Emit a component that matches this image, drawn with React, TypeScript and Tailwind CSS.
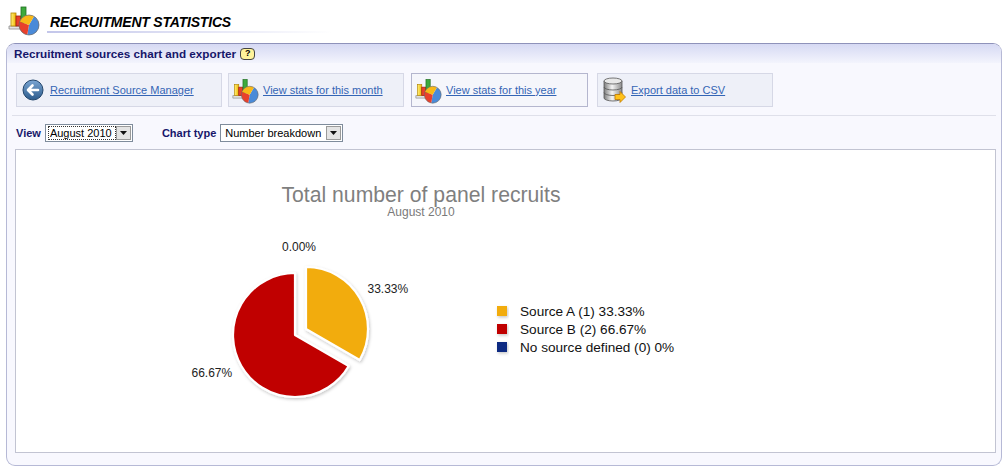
import React from "react";

const font = { fontFamily: '"Liberation Sans", Arial, sans-serif' };

function ChartIcon({ size = 32, id }: { size?: number; id: string }) {
  return (
    <svg width={size} height={size} viewBox="0 0 32 32">
      <defs>
        <linearGradient id={`y${id}`} x1="0" x2="1">
          <stop offset="0" stopColor="#fff27a" />
          <stop offset="1" stopColor="#f0b400" />
        </linearGradient>
      </defs>
      <path d="M1 22 h18 l-2 3 h-16 z" fill="#e4e4e4" stroke="#8a8a8a" strokeWidth="0.8" />
      <rect x="3" y="9" width="5" height="13" fill={`url(#y${id})`} stroke="#b38600" strokeWidth="0.8" />
      <rect x="8" y="12" width="5" height="10" fill="#e8402c" stroke="#9c2010" strokeWidth="0.8" />
      <rect x="13" y="3" width="5" height="16" fill="#3caa3c" stroke="#1f6e1f" strokeWidth="0.8" />
      <path d="M21 21 L26 12.34 A10 10 0 0 1 19.26 30.85 Z" fill="#4a8ad8" />
      <path d="M21 21 L19.26 30.85 A10 10 0 0 1 11.6 17.58 Z" fill="#e8402c" />
      <path d="M21 21 L11.6 17.58 A10 10 0 0 1 26 12.34 Z" fill="#f8b818" />
      <circle cx="21" cy="21" r="10" fill="none" stroke="#6a6a6a" strokeWidth="0.7" />
    </svg>
  );
}

function BackIcon() {
  return (
    <svg width="22" height="22" viewBox="0 0 22 22">
      <defs>
        <linearGradient id="ba" x1="0" y1="0" x2="0" y2="1">
          <stop offset="0" stopColor="#7ba6d3" />
          <stop offset="1" stopColor="#2c5b8c" />
        </linearGradient>
      </defs>
      <circle cx="11" cy="11" r="10" fill="url(#ba)" stroke="#23466c" strokeWidth="1" />
      <path d="M16 11 H6.5 M10.5 6.5 L6 11 L10.5 15.5" stroke="#fff" strokeWidth="2.6" fill="none" strokeLinecap="round" strokeLinejoin="round" />
    </svg>
  );
}

function DbIcon() {
  return (
    <svg width="25" height="28" viewBox="0 0 25 28">
      <defs>
        <linearGradient id="db" x1="0" x2="1">
          <stop offset="0" stopColor="#7d7d7d" />
          <stop offset="0.45" stopColor="#f4f4f4" />
          <stop offset="1" stopColor="#8a8a8a" />
        </linearGradient>
      </defs>
      <path d="M2 5 v17 a9 3 0 0 0 18 0 v-17" fill="url(#db)" stroke="#555" strokeWidth="0.8" />
      <ellipse cx="11" cy="5" rx="9" ry="3" fill="#e8e8e8" stroke="#555" strokeWidth="0.8" />
      <path d="M2 11 a9 3 0 0 0 18 0 M2 16.5 a9 3 0 0 0 18 0" fill="none" stroke="#555" strokeWidth="0.8" />
      <path d="M13 18.5 h5 v-3 l5.5 5.5 l-5.5 5.5 v-3 h-5 z" fill="#ffc21a" stroke="#c07800" strokeWidth="0.8" strokeLinejoin="round" />
    </svg>
  );
}

function Select({ value, width, focused }: { value: string; width: string; focused?: boolean }) {
  return (
    <div className={`flex h-[18px] shrink-0 items-center border border-[#7f8c9c] bg-white ${width}`}>
      <span className={`ml-[2px] min-w-0 flex-1 whitespace-nowrap border px-[1px] text-[11px] leading-[12px] text-black ${focused ? "border-dotted border-[#333]" : "border-transparent"}`}>{value}</span>
      <span className="mr-[1px] flex h-[14px] w-[15px] shrink-0 items-center justify-center border border-[#9a9a9a] bg-[#e4e4e4]">
        <svg width="7" height="4" viewBox="0 0 7 4"><path d="M0 0 H7 L3.5 4 Z" fill="#111" /></svg>
      </span>
    </div>
  );
}

const buttons = [
  { label: "Recruitment Source Manager", icon: "back", w: "w-[206px]", ml: "", cls: "border-[#d6d8e6] bg-[#eef0f8]" },
  { label: "View stats for this month", icon: "chart", w: "w-[176px]", ml: "ml-[6px]", cls: "border-[#d6d8e6] bg-[#eef0f8]" },
  { label: "View stats for this year", icon: "chart", w: "w-[177px]", ml: "ml-[7px]", cls: "border-[#b4b6ce] bg-[#f5f6fb]" },
  { label: "Export data to CSV", icon: "db", w: "w-[176px]", ml: "ml-[9px]", cls: "border-[#d6d8e6] bg-[#eef0f8]" },
];

function PieChart() {
  return (
    <svg width="979" height="302" viewBox="16 150 979 302" className="block">
      <defs>
        <filter id="sh" x="-20%" y="-20%" width="140%" height="140%">
          <feDropShadow dx="1" dy="1.5" stdDeviation="1.5" floodColor="#000" floodOpacity="0.22" />
        </filter>
      </defs>
      <g style={font}>
        <text x="421" y="202" textAnchor="middle" fontSize="21.2" fill="#7f7f7f">Total number of panel recruits</text>
        <text x="421" y="216" textAnchor="middle" fontSize="12" fill="#7a7a7a">August 2010</text>
      </g>
      <g filter="url(#sh)">
        <path d="M295 335 L348.7 366 A62 62 0 1 1 295 273 Z" fill="#c00000" stroke="#fff" strokeWidth="2.2" strokeLinejoin="round" />
        <path d="M306 329 L306 267 A62 62 0 0 1 359.7 360 Z" fill="#f2ac10" stroke="#fff" strokeWidth="2.2" strokeLinejoin="round" />
      </g>
      <g style={font} fontSize="12" fill="#222">
        <text x="282" y="251">0.00%</text>
        <text x="367.5" y="293">33.33%</text>
        <text x="191.5" y="377">66.67%</text>
      </g>
      <g filter="url(#sh)">
        <rect x="497" y="306" width="10" height="10" fill="#f2ac10" />
        <rect x="497" y="324" width="10" height="10" fill="#c00000" />
        <rect x="497" y="342" width="10" height="10" fill="#0a2a82" />
      </g>
      <g style={font} fontSize="13.6" fill="#111">
        <text x="520" y="316">Source A (1) 33.33%</text>
        <text x="520" y="334">Source B (2) 66.67%</text>
        <text x="520" y="352">No source defined (0) 0%</text>
      </g>
    </svg>
  );
}

export default function App() {
  return (
    <div className="h-[472px] w-[1008px] overflow-hidden bg-white" style={font}>
      <div className="flex pl-[8px] pt-[4px]">
        <ChartIcon id="h" />
        <div className="ml-[10px] pt-[10px]">
          <div className="text-[14px] font-bold italic leading-[16px] tracking-[-0.2px] text-black">RECRUITMENT STATISTICS</div>
          <div className="-ml-[3px] mt-[1px] h-[2px] w-[286px] bg-gradient-to-r from-[#c3c6ea] to-transparent" />
        </div>
      </div>

      <div className="mx-[6px] mt-[7px] overflow-hidden rounded-[9px] border border-[#b6b9d6] border-t-[#8e92ba] bg-[#f8f8fe]">
        <div className="flex h-[19px] items-center bg-gradient-to-b from-[#d6d9f3] to-[#f3f4fd] pl-[7px]">
          <span className="text-[11.7px] font-bold text-[#16166a]">Recruitment sources chart and exporter</span>
          <span className="ml-[4px] flex h-[12px] w-[15px] items-center justify-center rounded-[4px] border border-[#444] bg-[#fff39a] text-[9px] font-bold leading-none text-black">?</span>
        </div>

        <div className="px-[5px] pb-[12px]">
          <div className="flex pl-[4px] pt-[10px]">
            {buttons.map((b) => (
              <div key={b.label} className={`flex h-[34px] items-center border ${b.cls} ${b.w} ${b.ml}`}>
                {b.icon === "back" && <span className="ml-[5px] mr-[6px] flex"><BackIcon /></span>}
                {b.icon === "chart" && <span className="ml-[3px] mr-[4px] flex"><ChartIcon size={27} id={b.label.replace(/ /g, "")} /></span>}
                {b.icon === "db" && <span className="ml-[4px] mr-[4px] flex"><DbIcon /></span>}
                <a href="#" className="text-[11px] text-[#3465b5] underline">{b.label}</a>
              </div>
            ))}
          </div>

          <div className="mt-[8px] h-px bg-[#dfe0ea]" />

          <div className="mt-[8px] flex items-center pl-[4px]">
            <span className="mr-[4px] text-[11px] font-bold text-[#16166a]">View</span>
            <Select value="August 2010" width="w-[88px]" focused />
            <span className="ml-[29px] mr-[4px] text-[11px] font-bold text-[#16166a]">Chart type</span>
            <Select value="Number breakdown" width="w-[123px]" />
          </div>

          <div className="ml-[3px] mt-[7px] h-[304px] border border-[#c2c4d2] bg-white">
            <PieChart />
          </div>
        </div>
      </div>
    </div>
  );
}
